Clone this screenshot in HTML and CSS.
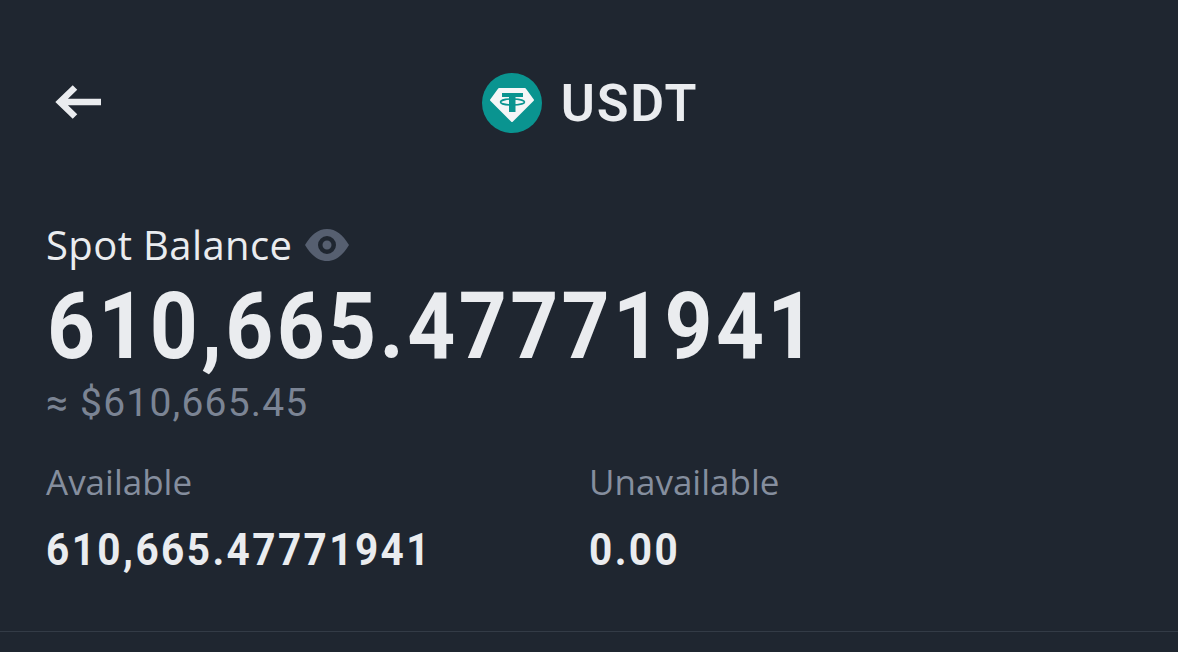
FILE: index.html
```html
<!DOCTYPE html>
<html lang="en">
<head>
    <meta charset="UTF-8">
    <title>USDT</title>
    <link rel="stylesheet" href="styles.css">
</head>
<body>
    <div class="container">
        <header class="top-bar">
            <svg class="back-icon" viewBox="0 0 46 36" width="46" height="36" aria-hidden="true">
                <path d="M46 18H6M20 3.500L5 18l15 14.500" fill="none" stroke="#eaecef" stroke-width="6.500"/>
            </svg>
            <div class="coin-title">
                <svg class="coin-icon" viewBox="0 0 60 60" width="60" height="60" aria-hidden="true">
                    <circle cx="30" cy="30" r="30" fill="#0a9490"/>
                    <path d="M17 16h26l8 11-21 21L9 27z" fill="#f5f6f7" stroke="#f5f6f7" stroke-width="2" stroke-linejoin="round"/>
                    <path d="M20 20h21v4h-7.500v15h-6.500V24H20z" fill="#0a9490"/>
                    <ellipse cx="30.500" cy="29" rx="12" ry="3" fill="none" stroke="#0a9490" stroke-width="1.600"/>
                </svg>
                <span class="coin-name">USDT</span>
            </div>
        </header>

        <section class="balance">
            <div class="balance-label">
                <span>Spot Balance</span>
                <svg class="eye-icon" viewBox="0 0 44 32" width="44" height="32" aria-hidden="true">
                    <path fill-rule="evenodd" d="M0 16C6 6 13 0 22 0s16 6 22 16c-6 10-13 16-22 16S6 26 0 16zm22-9a9 9 0 1 0 0 18 9 9 0 0 0 0-18zm0 4.500a4.500 4.500 0 1 1 0 9 4.500 4.500 0 0 1 0-9z" fill="#565f70"/>
                </svg>
            </div>
            <div class="balance-amount">610,665.47771941</div>
            <div class="balance-fiat">≈ $610,665.45</div>
        </section>

        <section class="details">
            <div class="detail-col">
                <div class="detail-label">Available</div>
                <div class="detail-value">610,665.47771941</div>
            </div>
            <div class="detail-col">
                <div class="detail-label">Unavailable</div>
                <div class="detail-value">0.00</div>
            </div>
        </section>
    </div>
</body>
</html>
```

FILE: styles.css
```css
html, body {
    margin: 0;
    height: 100%;
}
body {
    background-color: #1f2630;
    color: #eaecef;
    font-family: 'Open Sans', 'Liberation Sans', sans-serif;
    overflow: hidden;
}
.container {
    height: 632px;
    box-sizing: border-box;
    border-bottom: 1px solid #333b46;
    padding: 73px 46px 0;
}
.top-bar {
    position: relative;
    display: flex;
    justify-content: center;
    height: 60px;
    padding-left: 2px;
}
.back-icon {
    position: absolute;
    left: 9px;
    top: 11px;
}
.coin-title {
    display: flex;
    align-items: center;
    gap: 19px;
}
.coin-name {
    font-family: Roboto, sans-serif;
    font-size: 52px;
    font-weight: 600;
    letter-spacing: 1.800px;
}
.balance {
    margin-top: 87px;
}
.balance-label {
    display: flex;
    align-items: center;
    gap: 13px;
    font-size: 40px;
    line-height: 50px;
    letter-spacing: .400px;
    color: #eaecef;
}
.balance-amount {
    font-family: Roboto, sans-serif;
    font-size: 93px;
    font-weight: 700;
    line-height: 100px;
    letter-spacing: 3.800px;
    margin-top: 7px;
    padding-left: 1px;
    transform: scaleX(.9);
    transform-origin: left;
}
.balance-fiat {
    font-family: Roboto, sans-serif;
    font-size: 39px;
    line-height: 44px;
    letter-spacing: 1.200px;
    color: #7b8494;
    margin-top: 4px;
}
.details {
    display: flex;
    margin-top: 35px;
}
.detail-col {
    width: 547px;
}
.detail-label {
    font-size: 35px;
    line-height: 44px;
    color: #858e9e;
}
.detail-value {
    font-family: Roboto, sans-serif;
    font-size: 45px;
    font-weight: 700;
    line-height: 56px;
    letter-spacing: 2.700px;
    margin-top: 18px;
    transform: scaleX(.9);
    transform-origin: left;
}
```
